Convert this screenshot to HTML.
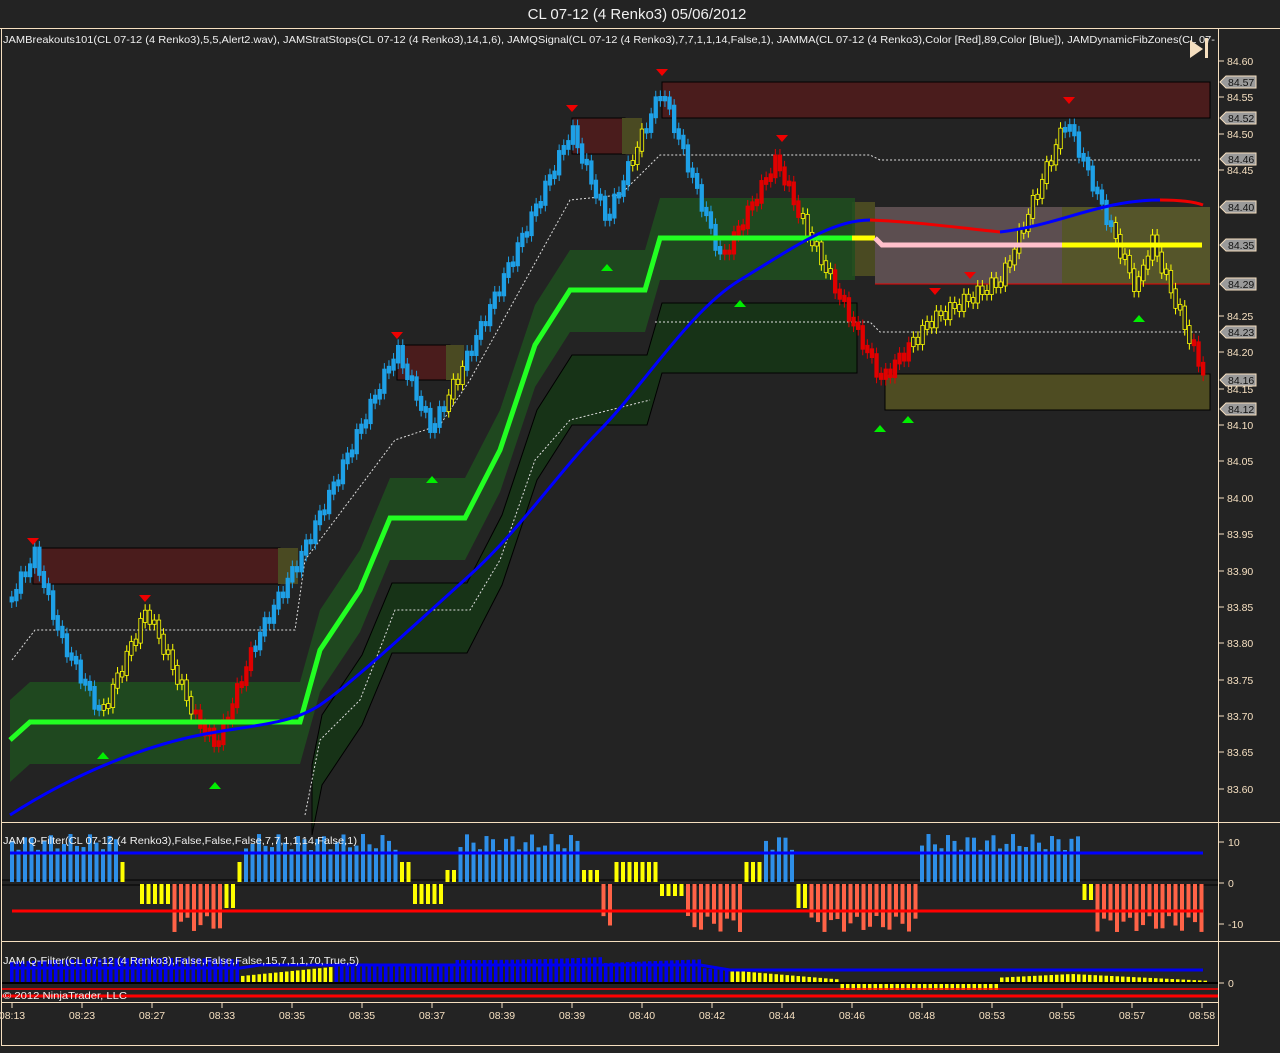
<!DOCTYPE html>
<html><head><meta charset="utf-8"><style>
html,body{margin:0;padding:0;background:#232323;}
body{width:1280px;height:1048px;overflow:hidden;font-family:"Liberation Sans",sans-serif;}
svg text{font-family:"Liberation Sans",sans-serif;}
</style></head><body>
<svg id="s" width="1280" height="1048" xmlns="http://www.w3.org/2000/svg">
<rect width="1280" height="1048" fill="#232323"/>
<text x="637" y="19" fill="#f0f0f0" font-size="15" text-anchor="middle">CL 07-12 (4 Renko3)  05/06/2012</text>
<g id="main"></g>
<g fill="none" stroke="#f5dfc0" stroke-width="1">
<rect x="1.5" y="28.5" width="1217" height="1017"/>
<line x1="1" y1="822.5" x2="1280" y2="822.5"/>
<line x1="1" y1="941.5" x2="1280" y2="941.5"/>
<line x1="1" y1="1002.5" x2="1219" y2="1002.5"/>
<line x1="1218.5" y1="28" x2="1218.5" y2="1002"/>
<line x1="0" y1="28.5" x2="1280" y2="28.5"/>
</g>
<text x="3" y="43" fill="#f0f0f0" font-size="10.5" textLength="1212" lengthAdjust="spacingAndGlyphs">JAMBreakouts101(CL 07-12 (4 Renko3),5,5,Alert2.wav), JAMStratStops(CL 07-12 (4 Renko3),14,1,6), JAMQSignal(CL 07-12 (4 Renko3),7,7,1,1,14,False,1), JAMMA(CL 07-12 (4 Renko3),Color [Red],89,Color [Blue]), JAMDynamicFibZones(CL 07-</text>
<polygon points="1190,40 1203,49 1190,58" fill="#f5dfc0"/><rect x="1205" y="38" width="3" height="20" fill="#f5dfc0"/>
<text x="3" y="844" fill="#f0f0f0" font-size="10.5" textLength="354" lengthAdjust="spacingAndGlyphs">JAM Q-Filter(CL 07-12 (4 Renko3),False,False,False,7,7,1,1,14,False,1)</text>
<text x="3" y="964" fill="#f0f0f0" font-size="10.5" textLength="356" lengthAdjust="spacingAndGlyphs">JAM Q-Filter(CL 07-12 (4 Renko3),False,False,False,15,7,1,1,70,True,5)</text>
<text x="3" y="999" fill="#f0f0f0" font-size="10.5" textLength="124" lengthAdjust="spacingAndGlyphs">© 2012 NinjaTrader, LLC</text>
<g id="axis" fill="#f5dfc0" font-size="10.5"></g>
</svg>
<script>
var NS="http://www.w3.org/2000/svg",M=document.getElementById("main"),A=document.getElementById("axis");
function el(p,t,a){var e=document.createElementNS(NS,t);for(var k in a)e.setAttribute(k,a[k]);p.appendChild(e);return e;}
[[33,548,280,584,"#4a1c1c"],[397,345,450,380,"#4a1c1c"],[572,118,625,154,"#4a1c1c"],[662,82,1210,118,"#4a1c1c"]].forEach(function(b){el(M,"rect",{x:b[0],y:b[1],width:b[2]-b[0],height:b[3]-b[1],fill:b[4],stroke:"#000"});});
el(M,"rect",{x:278,y:548,width:20,height:36,fill:"#4a4a22"});
el(M,"rect",{x:446,y:345,width:18,height:35,fill:"#4a4a22"});
el(M,"rect",{x:622,y:118,width:20,height:36,fill:"#4a4a22"});
el(M,"rect",{x:875,y:207,width:190,height:77,fill:"#5c4e50"});
el(M,"rect",{x:1062,y:207,width:148,height:77,fill:"#55552a"});
el(M,"line",{x1:875,y1:284,x2:1210,y2:284,stroke:"#e00"});
el(M,"rect",{x:885,y:374,width:325,height:36,fill:"#4e4c22",stroke:"#000"});
el(M,"rect",{x:852,y:202,width:23,height:74,fill:"#4a4a22"});
var G=[[10,740],[30,722],[300,722],[320,650],[360,590],[390,518],[465,518],[500,450],[535,345],[570,290],[645,290],[660,238],[855,238]];
var up=G.map(function(p){return p[0]+","+(p[1]-40)}).join(" "),dn=G.slice().reverse().map(function(p){return p[0]+","+(p[1]+42)}).join(" ");
el(M,"polygon",{points:up+" "+dn,fill:"#1f4f1f",opacity:"0.85"});
var D=G.slice(3).map(function(p){return [p[0]+2,p[1]+95]});
D.unshift([312,795]);
el(M,"polygon",{points:D.map(function(p){return p[0]+","+(p[1]-30)}).join(" ")+" "+D.slice().reverse().map(function(p){return p[0]+","+(p[1]+40)}).join(" "),fill:"#173317",stroke:"#000"});
[[[12,660],[35,630],[295,630],[305,560],[395,440],[440,425],[470,380],[570,200],[620,195],[660,155],[870,155],[880,160],[1200,160]],
 [[655,322],[870,322],[880,332],[1200,332]],
 [[305,815],[320,740],[360,700],[395,610],[470,610],[500,560],[535,460],[570,420],[650,400]]].forEach(function(L){
 el(M,"polyline",{points:L.map(function(p){return p.join(",")}).join(" "),fill:"none",stroke:"#ddd","stroke-width":1,"stroke-dasharray":"2,2"});});
var K=[[8,600],[33,555],[60,640],[100,715],[145,610],[195,720],[215,745],[255,640],[300,555],[395,350],[430,430],[460,370],[570,130],[605,220],[660,90],[720,260],[775,160],[800,220],[880,380],[930,320],[1000,280],[1065,120],[1135,290],[1150,240],[1200,370]];
var C=[[40,"#1ea0e6"],[100,"#1ea0e6"],[190,"#ffff00"],[250,"#e00000"],[445,"#1ea0e6"],[465,"#ffff00"],[630,"#1ea0e6"],[642,"#ffff00"],[720,"#1ea0e6"],[800,"#e00000"],[830,"#ffff00"],[910,"#e00000"],[1060,"#ffff00"],[1110,"#1ea0e6"],[1192,"#ffff00"],[1300,"#e00000"]];
function col(x){for(var i=0;i<C.length;i++)if(x<C[i][0])return C[i][1];}
function py(x){for(var i=1;i<K.length;i++)if(x<=K[i][0]){var a=K[i-1],b=K[i];return a[1]+(b[1]-a[1])*(x-a[0])/(b[0]-a[0]);}return 370;}
var prev=py(8);
for(var x=10;x<=1202;x+=4.6){var y=py(x)+Math.sin(x*0.9)*6;var c=col(x);var t=Math.min(prev,y)-2,h=Math.abs(y-prev)+4;
 el(M,"line",{x1:x+1.75,y1:t-6,x2:x+1.75,y2:t+h+6,stroke:c});
 el(M,"rect",{x:x,y:t,width:3.5,height:h,fill:c==="#ffff00"?"#232323":c,stroke:c,"stroke-width":0.8});prev=y;}
el(M,"polyline",{points:G.map(function(p){return p.join(",")}).join(" ")+" 870,238",fill:"none",stroke:"#22ff22","stroke-width":5});
el(M,"line",{x1:852,y1:238,x2:875,y2:238,stroke:"#ffff00","stroke-width":5});
el(M,"polyline",{points:"875,238 882,245 1062,245",fill:"none",stroke:"#ffc0cb","stroke-width":5});
el(M,"line",{x1:1062,y1:245,x2:1202,y2:245,stroke:"#ffff00","stroke-width":5});
el(M,"path",{d:"M10,815 C80,770 150,745 200,735 S290,725 320,705 S420,620 470,575 S560,470 600,430 S690,310 740,280 S830,220 870,220",fill:"none",stroke:"#0000ff","stroke-width":3});
el(M,"path",{d:"M870,220 C920,222 960,228 1000,232",fill:"none",stroke:"#ee0000","stroke-width":3});
el(M,"path",{d:"M1000,232 C1060,225 1100,200 1160,200",fill:"none",stroke:"#0000ff","stroke-width":3});
el(M,"path",{d:"M1160,200 C1180,200 1195,202 1203,205",fill:"none",stroke:"#ee0000","stroke-width":3});
[[33,538],[145,595],[397,332],[572,105],[662,69],[782,135],[935,288],[970,272],[1069,97]].forEach(function(p){el(M,"polygon",{points:(p[0]-6)+","+p[1]+" "+(p[0]+6)+","+p[1]+" "+p[0]+","+(p[1]+7),fill:"#ee0000"});});
[[103,752],[215,782],[432,476],[607,264],[740,300],[880,425],[908,416],[1139,315]].forEach(function(p){el(M,"polygon",{points:(p[0]-6)+","+(p[1]+7)+" "+(p[0]+6)+","+(p[1]+7)+" "+p[0]+","+p[1],fill:"#00ee00"});});
[["84.60",61],["84.55",97],["84.50",134],["84.45",170],["84.25",316],["84.20",352],["84.15",389],["84.10",425],["84.05",461],["84.00",498],["83.95",534],["83.90",571],["83.85",607],["83.80",643],["83.75",680],["83.70",716],["83.65",752],["83.60",789]].forEach(function(a){
 el(A,"line",{x1:1218,y1:a[1],x2:1224,y2:a[1],stroke:"#f5dfc0"});var t=el(A,"text",{x:1227,y:a[1]+4});t.textContent=a[0];});
[["84.57",82],["84.52",118],["84.46",159],["84.40",207],["84.35",245],["84.29",284],["84.23",332],["84.16",380],["84.12",409]].forEach(function(a){
 el(A,"polygon",{points:"1220,"+a[1]+" 1226,"+(a[1]-6)+" 1256,"+(a[1]-6)+" 1256,"+(a[1]+6)+" 1226,"+(a[1]+6),fill:"#9a9a9a",stroke:"#f5dfc0"});
 var t=el(A,"text",{x:1228,y:a[1]+4,fill:"#111"});t.textContent=a[0];});
[["10",842],["0",883],["-10",924],["0",983]].forEach(function(a){el(A,"line",{x1:1218,y1:a[1],x2:1224,y2:a[1],stroke:"#f5dfc0"});var t=el(A,"text",{x:1228,y:a[1]+4});t.textContent=a[0];});
el(M,"line",{x1:2,y1:880,x2:1218,y2:880,stroke:"#000","stroke-width":1});
el(M,"line",{x1:2,y1:885,x2:1218,y2:885,stroke:"#000","stroke-width":1});
var S=[[115,1],[125,.5],[140,0],[170,-.5],[220,-1],[232,-.6],[242,.5],[300,1],[400,1],[410,.5],[430,-.5],[440,-.5],[455,.3],[580,1],[600,.3],[612,-1],[660,.5],[680,-.3],[740,-1],[760,.5],[795,1],[805,-.6],[915,-1],[920,1],[1080,1],[1090,-.4],[1205,-1]];
function sv(x){for(var i=0;i<S.length;i++)if(x<S[i][0])return S[i][1];return -1;}
for(var x=10;x<1205;x+=6.5){var v=sv(x),h=(Math.abs(v)>.9?(40+Math.sin(x*.3)*8):Math.abs(v)*40);
 var c=v>0.9?"#2e8fe8":(v<-0.9?"#ff6347":"#ffff00");
 if(v>0)el(M,"rect",{x:x,y:882-h,width:4,height:h,fill:c});else el(M,"rect",{x:x,y:884,width:4,height:h,fill:c});}
el(M,"line",{x1:10,y1:853,x2:1203,y2:853,stroke:"#0000ff","stroke-width":3});
el(M,"line",{x1:12,y1:911,x2:1203,y2:911,stroke:"#ff0000","stroke-width":3});
for(var x=10;x<1205;x+=5.5){var h,c;
 if(x<700&&(x<240||x>330)){h=20+Math.sin(x*.01)*4+(x>450&&x<600?6:0);c="#0000ee";}
 else if(x<700){h=6+(x-240)/10;c="#ffff00";}
 else if(x<840){h=14-(x-700)/12;c=x<730?"#0000ee":"#ffff00";}
 else if(x<1000){h=-6;c="#ffff00";}
 else {h=8-Math.abs(x-1070)/20;c="#ffff00";}
 if(h>=0)el(M,"rect",{x:x,y:982-h,width:3.5,height:h,fill:c});else el(M,"rect",{x:x,y:984,width:3.5,height:-h,fill:c});}
el(M,"polyline",{points:"10,968 240,968 260,965 700,965 730,970 1203,970",fill:"none",stroke:"#0000ee","stroke-width":3});
el(M,"line",{x1:2,y1:983,x2:1218,y2:983,stroke:"#000","stroke-width":2});
el(M,"line",{x1:2,y1:989,x2:1218,y2:989,stroke:"#ff0000","stroke-width":1.5});
el(M,"line",{x1:2,y1:996,x2:1218,y2:996,stroke:"#ff0000","stroke-width":3});
var T=["08:13","08:23","08:27","08:33","08:35","08:35","08:37","08:39","08:39","08:40","08:42","08:44","08:46","08:48","08:53","08:55","08:57","08:58"];
T.forEach(function(t,i){var x=12+i*70;el(A,"line",{x1:x,y1:1003,x2:x,y2:1008,stroke:"#f5dfc0"});var e=el(A,"text",{x:x,y:1019,"text-anchor":"middle"});e.textContent=t;});
</script>
</body></html>
